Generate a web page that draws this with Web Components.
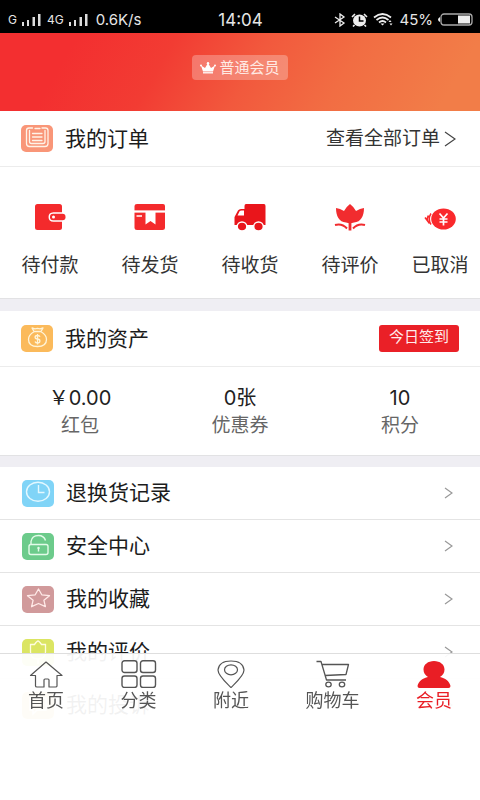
<!DOCTYPE html>
<html lang="zh-CN">
<head>
<meta charset="utf-8">
<meta name="viewport" content="width=device-width, initial-scale=1">
<title>会员中心</title>
<style>
  body { margin: 0; background: #fff; font-family: Inter, "Noto Sans CJK SC", sans-serif; color: #1c1c1c; overflow: hidden; }
</style>
</head>
<body>
<member-page></member-page>
<script>
const ICONS = {
  signal: [20, 12, '<g fill="#ddd"><rect x="0" y="8" width="2" height="4"/><rect x="5" y="6" width="2" height="6"/><rect x="10.500" y="3" width="2.500" height="9"/><rect x="16" y="0" width="2.500" height="12"/></g>'],
  bluetooth: [12, 14, '<path d="M1 4l9 6-4 3V1l4 3-9 6" fill="none" stroke="#eee" stroke-width="1.300"/>'],
  alarm: [17, 14, '<ellipse cx="8.500" cy="7.500" rx="6.500" ry="6" fill="#eee"/><path d="M8.500 3.500v4.500h4" fill="none" stroke="#000" stroke-width="1.500"/><path d="M1 4l3-3M16 4l-3-3M3.500 12l-1.500 1.500M13.500 12l1.500 1.500" stroke="#eee" stroke-width="1.600"/>'],
  wifi: [21, 13, '<g fill="none" stroke="#eee" stroke-width="1.700"><path d="M1 4.500Q9.500-2.500 18 4.500M3.500 7Q9.500 2 15.500 7M6 9.500Q9.500 6.500 13 9.500"/></g><path d="M7.500 10.500h4l-2 2zM15.500 9l1.500-2 1.500 2zM16.500 10.500h3l-1.500 2z" fill="#eee"/>'],
  battery: [35, 13, '<rect x="3" y="1" width="31" height="11" rx="3" fill="none" stroke="#aaa" stroke-width="1.300"/><rect x="20" y="2.500" width="12" height="8" fill="#eee"/><path d="M2 4v5Q0 8 0 6.500T2 4z" fill="#eee"/>'],
  crown: [16, 12, '<path d="M1 3.500l4 2.500 3-5 3 5 4-2.500-2 6H3z" fill="#fff"/><path d="M3 10.800h10" stroke="#fff" stroke-width="1.300"/><g fill="#fff"><circle cx="1" cy="3.500" r="1"/><circle cx="8" cy="1.200" r="1.200"/><circle cx="15" cy="3.500" r="1"/></g>'],
  order: [32, 27, '<rect width="32" height="27" rx="5" fill="#f99678"/><g fill="none" stroke="#fff3e8" stroke-width="1.300" stroke-linecap="round"><path d="M11.500 3H8Q5.500 3 5.500 5.500V18.500Q5.500 21.500 8.500 21.500H24Q27 21.500 27 18.500V5.500Q27 3 24.500 3H21M8.500 5.500V16.500Q8.500 18.500 10.500 18.500H22Q24 18.500 24 16.500V5.500M14 3.500h5M11.500 8.500h9.500M11.500 12h9.500M11.500 15.500h9.500"/></g>'],
  money: [32, 27, '<rect width="32" height="27" rx="5" fill="#fbba5b"/><g fill="none" stroke="#fff4d8" stroke-width="1.300" stroke-linejoin="round"><path d="M13 6.500l-2-3.500 3 .8 2.500-.5 2.500.5 3-.8-2 3.500zM13 6.800C9 9 7.500 12 7.500 14.500C7.500 19 11 21.500 16.500 21.500S25.500 19 25.500 14.500C25.500 12 24 9 20 6.800"/><path d="M19 11.800Q18.500 10.500 16.500 10.500C13.300 10.500 13.300 13.800 16.500 14S19.700 18 16.500 18Q14.500 18 14 16.500M16.500 9v10.500"/></g>'],
  history: [32, 27, '<rect width="32" height="27" rx="5" fill="#80d4f7"/><g fill="none" stroke="#e3f8ff" stroke-width="1.400"><ellipse cx="16" cy="11.800" rx="11.500" ry="9.500"/><path d="M16.500 5v7.500h6"/></g>'],
  lock: [32, 27, '<rect width="32" height="27" rx="5" fill="#6ccb8b"/><g fill="none" stroke="#e3fbe9" stroke-width="1.400"><rect x="7" y="11.500" width="19" height="10" rx="2"/><path d="M9 11V8.500Q10 2.500 16.500 2.500Q22 2.500 23.500 7.500M16.500 14.500v4"/></g><circle cx="16.500" cy="15" r="1.200" fill="#e3fbe9"/>'],
  star: [32, 27, '<rect width="32" height="27" rx="5" fill="#d19a9b"/><path d="M16.500 3l3.300 5.800 7.700.9-5.600 4.500 1.500 6.500-6.900-3.200-6.900 3.200 1.500-6.500L5.500 9.700l7.700-.9z" fill="none" stroke="#ffeae8" stroke-width="1.300" stroke-linejoin="round"/>'],
  review: [32, 27, '<rect width="32" height="27" rx="5" fill="#dbe562"/><path d="M8.500 13V5.500h4q2.500-3.500 3.500-3.500t3.500 3.500h4V13q0 7-7.500 7t-7.500-7zM16 20v5" fill="none" stroke="#fffde0" stroke-width="1.300"/>'],
  complain: [32, 27, '<rect width="32" height="27" rx="5" fill="#efcf7c"/><path d="M8 6h16v12H15l-4 4v-4H8z" fill="none" stroke="#fff" stroke-width="1.300"/>'],
  wallet: [32, 30, '<rect x="1" y="2" width="27" height="26" rx="2.500" fill="#f42a2c"/><path d="M29 10.200H19.500Q14.500 10.500 14.500 15T19.500 19.800H29z" fill="#fff"/><rect x="16" y="11.700" width="15.500" height="6.600" rx="3" fill="#f42a2c"/><circle cx="19.500" cy="15" r="1.500" fill="#fff"/>'],
  parcel: [32, 30, '<path d="M3 2h26q2 0 2 2v4.500H0.500V4q0-2 2.500-2zM.500 10.500H31V26q0 2-2.500 2H3q-2.500 0-2.500-2z" fill="#f42a2c"/><path d="M11.500 10v12.500l5-3.500 5 3.500V10z" fill="#fff"/><path d="M2.500 14h5.500M0 9.500h32" stroke="#fff" stroke-width="1.500"/>'],
  truck: [32, 30, '<path d="M12 2h18q1.500 0 1.500 2v19H.500v-8L4 8.500Q5 7 7 7h3.500V4q0-2 1.500-2z" fill="#e9151b"/><path d="M3.500 13.500l2-4q.500-1 2-1h2.500v5z" fill="#fff"/><g fill="#e9151b" stroke="#fff" stroke-width="1.400"><ellipse cx="8" cy="24.500" rx="4.800" ry="4.500"/><ellipse cx="24.500" cy="24.500" rx="4.800" ry="4.500"/></g>'],
  tulip: [32, 30, '<path d="M2 6q4 .5 8 3Q12 5 16 2q4 3 6 7 4-2.500 8-3c0 8-3 14-10 14.500q-2 .8-4 .8t-4-.8C5 20 2 14 2 6z" fill="#f12c2f"/><path d="M16 20v8.500" stroke="#f12c2f" stroke-width="2.800"/><path d="M1 23q7-2 12 3.500M31 23q-7-2-12 3.500" fill="none" stroke="#f12c2f" stroke-width="2"/>'],
  refund: [32, 30, '<ellipse cx="19.500" cy="17" rx="12.300" ry="10.500" fill="#fa292c"/><path d="M15.500 11.500l4 4.500 4-4.500M19.500 16v7.500M15.500 17h8M15.500 20h8" fill="none" stroke="#fff" stroke-width="1.700"/><path d="M7 11.500q-3.500 5.500 0 11M1 15.500l4.500 6M4.500 13.500q-2 3-.500 6" fill="none" stroke="#fa292c" stroke-width="1.500"/>'],
  more: [12, 16, '<path d="M1 1l10 7-10 7" fill="none" stroke="#444" stroke-width="1.200"/>'],
  chevron: [9, 12, '<path d="M1 1l7 5-7 5" fill="none" stroke="#999" stroke-width="1.200"/>'],
  home: [36, 28, '<path d="M2.500 15.500L18 2l16 13.500H29V26q0 1-1.500 1H21v-7q0-1-1-1h-3q-1 0-1 1v7H9q-1.500 0-1.500-1V15.500z" fill="none" stroke="#555" stroke-width="1.200" stroke-linejoin="round"/>'],
  grid: [36, 28, '<g fill="none" stroke="#555" stroke-width="1.400"><rect x="1" y=".7" width="15" height="11.800" rx="2.500"/><rect x="19.500" y=".7" width="15" height="11.800" rx="2.500"/><rect x="1" y="16" width="15" height="11.500" rx="2.500"/><rect x="19.500" y="16" width="15" height="11.500" rx="2.500"/></g>'],
  pin: [36, 28, '<g fill="none" stroke="#555" stroke-width="1.200"><path d="M18 27.500C12 21.500 5 15.500 5 10Q6 1 18 1T31 10C31 15.500 24 21.500 18 27.500z"/><ellipse cx="18" cy="9.800" rx="6.500" ry="5"/></g>'],
  cart: [36, 28, '<g fill="none" stroke="#555" stroke-width="1.300" stroke-linejoin="round"><path d="M1.500 1.500H6L11.500 20H31M7.500 4.500H33.500L31 14.500l-21 1"/><ellipse cx="13.500" cy="24.500" rx="2.700" ry="2.300"/><ellipse cx="27" cy="24.500" rx="2.700" ry="2.300"/></g>'],
  user: [36, 28, '<path d="M18 1C24 1 28.500 4.500 28.500 9.500Q28.500 14 24 17C29 18 33.500 21 34.500 26q0 2-2 2h-29q-2 0-2-2C2.500 21 7 18 12 17Q7.500 14 7.500 9.500C7.500 4.500 12 1 18 1z" fill="#e91e25"/>']
};

function define(name, html, setup) {
  const template = document.createElement('template');
  template.innerHTML = html;
  customElements.define(name, class extends HTMLElement {
    connectedCallback() {
      if (this.shadowRoot) return;
      this.attachShadow({ mode: 'open' }).append(template.content.cloneNode(true));
      if (setup) setup(this, this.shadowRoot);
    }
  });
}

define('ui-icon', `<style>:host { display: inline-flex; flex: none; } svg { display: block; }</style>`, (el, root) => {
  const [w, h, body] = ICONS[el.getAttribute('name')];
  root.innerHTML += `<svg width="${w}" height="${h}" viewBox="0 0 ${w} ${h}" aria-hidden="true">${body}</svg>`;
});

define('status-bar', `
<style>
  :host { display: grid; grid-template-columns: 1fr auto 1fr; align-items: center; height: 33px; padding: 6px 7px 0 8px; box-sizing: border-box; background: #000; color: #e6e6e6; font-size: 15px; line-height: 20px; }
  div { display: flex; align-items: center; gap: 5px; }
  .right { justify-content: flex-end; }
  small { font-size: 12px; }
  .speed { margin-left: 2px; }
  .time { font-size: 17px; }
</style>
<div><small>G</small><ui-icon name="signal"></ui-icon><small>4G</small><ui-icon name="signal"></ui-icon><span class="speed">0.6K/s</span></div>
<span class="time">14:04</span>
<div class="right"><ui-icon name="bluetooth"></ui-icon><ui-icon name="alarm"></ui-icon><ui-icon name="wifi"></ui-icon><span>45%</span><ui-icon name="battery"></ui-icon></div>`);

define('member-banner', `
<style>
  :host { display: flex; justify-content: center; height: 78px; padding-top: 22px; box-sizing: border-box; background: linear-gradient(120deg, #f32f30 15%, #f23c33 34%, #f2593d 52%, #f26d43 70%, #f27d48 92%); }
  span { display: flex; align-items: center; justify-content: center; gap: 3px; height: 25px; padding: 0 8px; border-radius: 4px; background: rgba(255,255,255,.27); color: #ffeae4; font-size: 15px; line-height: 22px; }
</style>
<span><ui-icon name="crown"></ui-icon><slot></slot></span>`);

define('section-head', `
<style>
  :host { display: flex; align-items: center; gap: 12px; height: 56px; padding: 0 21px; box-sizing: border-box; border-bottom: 1px solid #ececec; }
  h2 { flex: 1; margin: 0; font-size: 21px; font-weight: 400; line-height: 30px; }
</style>
<slot name="icon"></slot><h2><slot></slot></h2><slot name="action"></slot>`);

define('order-link', `
<style>
  :host { display: block; }
  a { display: flex; flex-direction: column; align-items: center; gap: 20px; color: #333; text-decoration: none; font-size: 19px; line-height: 28px; white-space: nowrap; }
</style>
<a href="#"><slot name="icon"></slot><span><slot></slot></span></a>`);

define('asset-stat', `
<style>
  :host { display: block; text-align: center; font-size: 19px; line-height: 28px; color: #666; }
  div { color: #222; font-size: 20px; }
</style>
<div><slot name="value"></slot></div><slot></slot>`);

define('menu-row', `
<style>
  :host { display: block; border-bottom: 1px solid #e4e4e4; }
  a { display: flex; align-items: center; gap: 12px; height: 52px; padding: 0 27px 0 22px; color: inherit; text-decoration: none; font-size: 21px; line-height: 30px; }
  span { flex: 1; }
</style>
<a href="#"><slot name="icon"></slot><span><slot></slot></span><ui-icon name="chevron"></ui-icon></a>`);

define('tab-link', `
<style>
  :host { display: block; color: #555; }
  :host([active]) { color: #e91e25; }
  a { display: flex; flex-direction: column; align-items: center; color: inherit; text-decoration: none; font-size: 18px; line-height: 26px; }
</style>
<a href="#"><slot name="icon"></slot><span><slot></slot></span></a>`);

define('tab-bar', `
<style>
  :host { position: fixed; left: 0; right: 0; bottom: 0; padding: 6px 28px 86px; border-top: 1px solid #dedede; background: rgba(255,255,255,.94); }
  nav { display: flex; justify-content: space-between; }
</style>
<nav><slot></slot></nav>`);

define('member-page', `
<style>
  :host { display: block; }
  section { border-bottom: 1px solid #e2e2e4; }
  .gap { height: 12px; background: #efeef3; }
  .gap.small { height: 11px; }
  .orders { display: grid; grid-template-columns: 5fr 5fr 5fr 5fr 4fr; padding: 35px 0 18px; }
  .assets { display: grid; grid-template-columns: repeat(3, 1fr); padding: 17px 0 15px; }
  .all { display: flex; align-items: center; gap: 4px; padding-right: 3px; color: #333; text-decoration: none; font-size: 19px; line-height: 28px; }
  button { height: 27px; padding: 0 10px 3px; border: 0; border-radius: 3px; background: #ea2027; color: #ffecec; font: 15px/24px Inter, "Noto Sans CJK SC", sans-serif; }
  menu-row:last-child { border-bottom: 0; }
</style>
<status-bar></status-bar>
<member-banner>普通会员</member-banner>
<section>
  <section-head><ui-icon slot="icon" name="order"></ui-icon>我的订单<a class="all" slot="action" href="#">查看全部订单<ui-icon name="more"></ui-icon></a></section-head>
  <div class="orders">
    <order-link><ui-icon slot="icon" name="wallet"></ui-icon>待付款</order-link>
    <order-link><ui-icon slot="icon" name="parcel"></ui-icon>待发货</order-link>
    <order-link><ui-icon slot="icon" name="truck"></ui-icon>待收货</order-link>
    <order-link><ui-icon slot="icon" name="tulip"></ui-icon>待评价</order-link>
    <order-link><ui-icon slot="icon" name="refund"></ui-icon>已取消</order-link>
  </div>
</section>
<div class="gap"></div>
<section>
  <section-head><ui-icon slot="icon" name="money"></ui-icon>我的资产<button type="button" slot="action">今日签到</button></section-head>
  <div class="assets">
    <asset-stat><span slot="value">￥0.00</span>红包</asset-stat>
    <asset-stat><span slot="value">0张</span>优惠券</asset-stat>
    <asset-stat><span slot="value">10</span>积分</asset-stat>
  </div>
</section>
<div class="gap small"></div>
<div class="menu">
  <menu-row><ui-icon slot="icon" name="history"></ui-icon>退换货记录</menu-row>
  <menu-row><ui-icon slot="icon" name="lock"></ui-icon>安全中心</menu-row>
  <menu-row><ui-icon slot="icon" name="star"></ui-icon>我的收藏</menu-row>
  <menu-row><ui-icon slot="icon" name="review"></ui-icon>我的评价</menu-row>
  <menu-row><ui-icon slot="icon" name="complain"></ui-icon>我的投诉</menu-row>
</div>
<tab-bar>
  <tab-link><ui-icon slot="icon" name="home"></ui-icon>首页</tab-link>
  <tab-link><ui-icon slot="icon" name="grid"></ui-icon>分类</tab-link>
  <tab-link><ui-icon slot="icon" name="pin"></ui-icon>附近</tab-link>
  <tab-link><ui-icon slot="icon" name="cart"></ui-icon>购物车</tab-link>
  <tab-link active><ui-icon slot="icon" name="user"></ui-icon>会员</tab-link>
</tab-bar>`);
</script>
</body>
</html>
